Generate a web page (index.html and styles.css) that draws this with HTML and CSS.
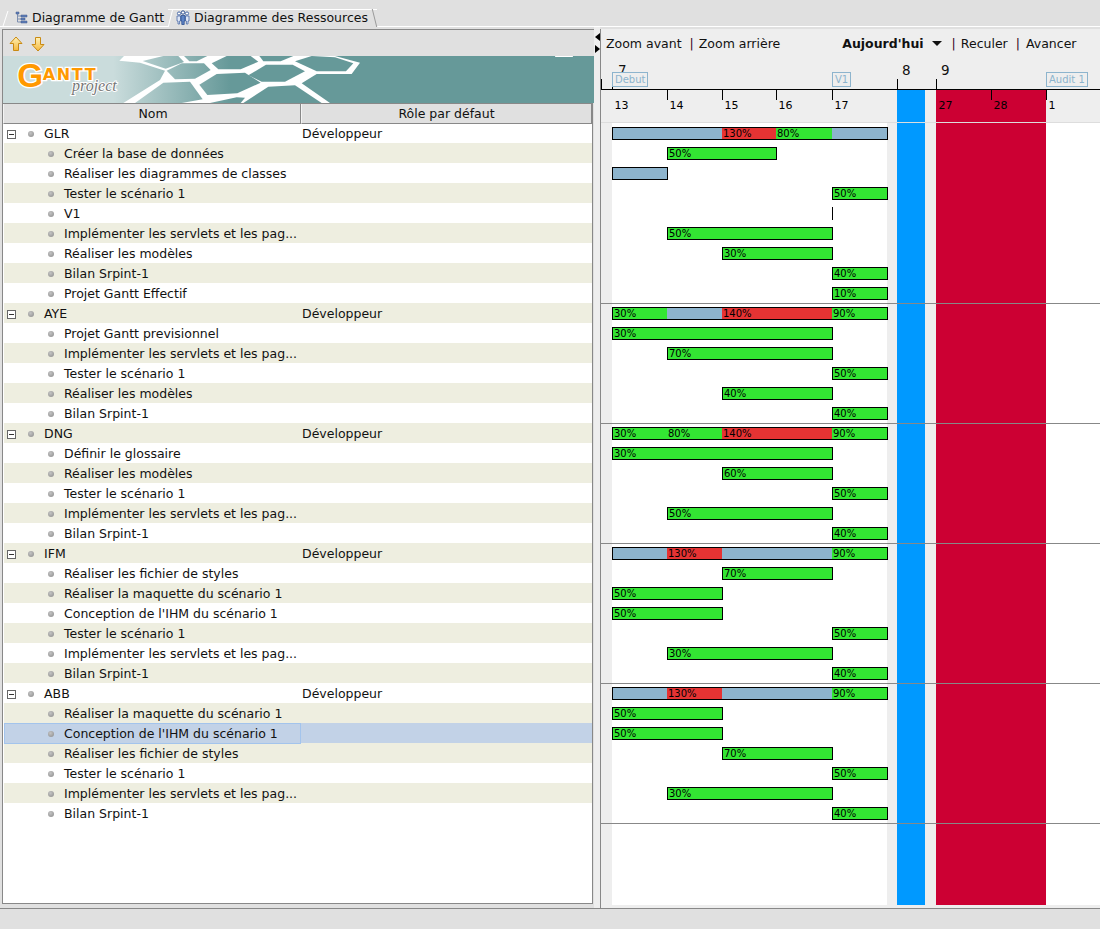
FILE: index.html
```html
<!DOCTYPE html>
<html lang="fr">
<head>
    <meta charset="UTF-8">
    <title>GanttProject</title>
    <link rel="stylesheet" href="styles.css">
</head>
<body>
    <div class="tabbar">
        <div class="tab tab-gantt">
            <svg class="tab-icon" width="13" height="13" viewBox="0 0 13 13">
                <path d="M2.5 2v9M2.5 5h4M2.5 8h4M2.5 11h4" fill="none" stroke="#7d8fb0"/>
                <path d="M1 1h3v2H1zM6 4h6v2H6zM6 7h4v2H6zM6 10h6v2H6z" fill="#5f7fb8" stroke="#41598c" stroke-width=".5"/>
            </svg>
            Diagramme de Gantt
        </div>
        <div class="tab tab-active">
            <svg class="tab-icon" width="14" height="15" viewBox="0 0 14 15">
                <circle cx="3" cy="3.5" r="1.6" fill="#fff" stroke="#4a6ba8"/>
                <circle cx="11" cy="3.5" r="1.6" fill="#fff" stroke="#4a6ba8"/>
                <path d="M1 6h3.5v5H3.6v3H2v-3H1zM9.500 6H13v5h-1v3h-1.600v-3h-.9z" fill="#dfe7f5" stroke="#4a6ba8" stroke-width=".8"/>
                <circle cx="7" cy="2.500" r="1.700" fill="#fff" stroke="#2f4f8f"/>
                <path d="M5 5.500h4v5.500H8.200v3.500H5.800V11H5z" fill="#5f85c5" stroke="#2f4f8f" stroke-width=".8"/>
            </svg>
            Diagramme des Ressources
        </div>
    </div>

    <div class="workspace">
        <div class="left-pane">
            <div class="left-toolbar">
                <svg width="14" height="16" viewBox="0 0 14 16">
                    <defs>
                        <linearGradient id="arrowFill" x1="0" y1="0" x2="0" y2="1">
                            <stop offset="0" stop-color="#fff2b8"/>
                            <stop offset="1" stop-color="#f5b83c"/>
                        </linearGradient>
                    </defs>
                    <path d="M7 1 13 7.500H9.500V14.500H4.500V7.500H1z" fill="url(#arrowFill)" stroke="#c98a14"/>
                </svg>
                <svg width="14" height="16" viewBox="0 0 14 16">
                    <path d="M7 15 13 8.500H9.500V1.500H4.500V8.500H1z" fill="url(#arrowFill)" stroke="#c98a14"/>
                </svg>
            </div>

            <svg class="banner" width="591" height="47" viewBox="9 168 1773 141">
                <defs>
                    <linearGradient id="bannerFill" gradientUnits="userSpaceOnUse" x1="340" y1="0" x2="690" y2="0">
                        <stop offset="0" stop-color="#cadcdc"/>
                        <stop offset="1" stop-color="#669999"/>
                    </linearGradient>
                </defs>
                <rect x="9" y="168" width="1773" height="141" fill="url(#bannerFill)"/>
                <polygon fill="#fff" points="358,182 372,168 1005,168 1080,188 1055,222 950,222 905,250 990,309 370,309 480,240 495,212 420,188"/>
                <g fill="url(#bannerFill)">
                    <polygon points="428,183 490,168 535,168 552,186 497,206"/>
                    <polygon points="552,168 622,168 590,184 568,184"/>
                    <polygon points="500,212 545,190 612,190 632,210 585,236 525,238"/>
                    <polygon points="635,190 680,168 752,168 775,185 722,208 655,208"/>
                    <polygon points="778,168 880,168 842,184 790,184"/>
                    <polygon points="745,226 798,194 878,194 915,214 855,245 785,245"/>
                    <polygon points="598,254 650,222 735,218 782,248 712,280 622,285"/>
                    <polygon points="885,184 935,168 1005,172 1060,190 1038,214 950,214"/>
                    <polygon points="730,309 805,260 885,256 965,309"/>
                    <polygon points="405,309 490,248 570,245 608,298 545,309"/>
                    <polygon points="630,309 710,292 735,293 722,309"/>
                </g>
                <rect x="1665" y="168" width="54" height="3" rx="1.500" fill="#fff"/>
                <text class="logo-g" x="52" y="262">G</text>
                <text class="logo-antt" x="128" y="241">ANTT</text>
                <text class="logo-project" x="216" y="274">project</text>
            </svg>

            <div class="table">
                <div class="table-head">
                    <div class="head-cell">Nom</div>
                    <div class="head-cell">Rôle par défaut</div>
                </div>
                <div class="rows">
                    <div class="row"><div class="name"><span class="toggle"></span><span class="dot"></span>GLR</div><div class="role">Développeur</div></div>
                    <div class="row"><div class="name task"><span class="dot"></span>Créer la base de données</div></div>
                    <div class="row"><div class="name task"><span class="dot"></span>Réaliser les diagrammes de classes</div></div>
                    <div class="row"><div class="name task"><span class="dot"></span>Tester le scénario 1</div></div>
                    <div class="row"><div class="name task"><span class="dot"></span>V1</div></div>
                    <div class="row"><div class="name task"><span class="dot"></span>Implémenter les servlets et les pag...</div></div>
                    <div class="row"><div class="name task"><span class="dot"></span>Réaliser les modèles</div></div>
                    <div class="row"><div class="name task"><span class="dot"></span>Bilan Srpint-1</div></div>
                    <div class="row"><div class="name task"><span class="dot"></span>Projet Gantt Effectif</div></div>

                    <div class="row"><div class="name"><span class="toggle"></span><span class="dot"></span>AYE</div><div class="role">Développeur</div></div>
                    <div class="row"><div class="name task"><span class="dot"></span>Projet Gantt previsionnel</div></div>
                    <div class="row"><div class="name task"><span class="dot"></span>Implémenter les servlets et les pag...</div></div>
                    <div class="row"><div class="name task"><span class="dot"></span>Tester le scénario 1</div></div>
                    <div class="row"><div class="name task"><span class="dot"></span>Réaliser les modèles</div></div>
                    <div class="row"><div class="name task"><span class="dot"></span>Bilan Srpint-1</div></div>

                    <div class="row"><div class="name"><span class="toggle"></span><span class="dot"></span>DNG</div><div class="role">Développeur</div></div>
                    <div class="row"><div class="name task"><span class="dot"></span>Définir le glossaire</div></div>
                    <div class="row"><div class="name task"><span class="dot"></span>Réaliser les modèles</div></div>
                    <div class="row"><div class="name task"><span class="dot"></span>Tester le scénario 1</div></div>
                    <div class="row"><div class="name task"><span class="dot"></span>Implémenter les servlets et les pag...</div></div>
                    <div class="row"><div class="name task"><span class="dot"></span>Bilan Srpint-1</div></div>

                    <div class="row"><div class="name"><span class="toggle"></span><span class="dot"></span>IFM</div><div class="role">Développeur</div></div>
                    <div class="row"><div class="name task"><span class="dot"></span>Réaliser les fichier de styles</div></div>
                    <div class="row"><div class="name task"><span class="dot"></span>Réaliser la maquette du scénario 1</div></div>
                    <div class="row"><div class="name task"><span class="dot"></span>Conception de l'IHM du scénario 1</div></div>
                    <div class="row"><div class="name task"><span class="dot"></span>Tester le scénario 1</div></div>
                    <div class="row"><div class="name task"><span class="dot"></span>Implémenter les servlets et les pag...</div></div>
                    <div class="row"><div class="name task"><span class="dot"></span>Bilan Srpint-1</div></div>

                    <div class="row"><div class="name"><span class="toggle"></span><span class="dot"></span>ABB</div><div class="role">Développeur</div></div>
                    <div class="row"><div class="name task"><span class="dot"></span>Réaliser la maquette du scénario 1</div></div>
                    <div class="row selected"><div class="name task"><span class="dot"></span>Conception de l'IHM du scénario 1</div></div>
                    <div class="row"><div class="name task"><span class="dot"></span>Réaliser les fichier de styles</div></div>
                    <div class="row"><div class="name task"><span class="dot"></span>Tester le scénario 1</div></div>
                    <div class="row"><div class="name task"><span class="dot"></span>Implémenter les servlets et les pag...</div></div>
                    <div class="row"><div class="name task"><span class="dot"></span>Bilan Srpint-1</div></div>
                </div>
            </div>
        </div>

        <div class="splitter">
            <span class="split-left"></span>
            <span class="split-right"></span>
        </div>

        <div class="right-pane">
            <div class="right-toolbar">
                <span>Zoom avant</span>
                <span class="pipe">|</span>
                <span>Zoom arrière</span>
                <span class="today">Aujourd'hui</span>
                <span class="caret"></span>
                <span class="pipe pipe-after-caret">|</span>
                <span>Reculer</span>
                <span class="pipe pipe-last">|</span>
                <span>Avancer</span>
            </div>

            <div class="weeks time-grid">
                <div class="week week-7">7</div>
                <div class="week week-8">8</div>
                <div class="week week-9">9</div>
                <div class="flag flag-debut">Debut</div>
                <div class="flag flag-v1">V1</div>
                <div class="flag flag-audit">Audit 1</div>
            </div>

            <div class="chart">
                <div class="stripes time-grid">
                    <div class="stripe-white d13 to18"></div>
                    <div class="stripe-blue"></div>
                    <div class="stripe-red"></div>
                    <div class="stripe-white stripe-last"></div>
                </div>

                <div class="days time-grid">
                    <div class="day d13 no-tick">13</div>
                    <div class="day d14">14</div>
                    <div class="day d15">15</div>
                    <div class="day d16">16</div>
                    <div class="day d17">17</div>
                    <div class="day day-27 no-tick">27</div>
                    <div class="day day-28">28</div>
                    <div class="day day-1">1</div>
                </div>

                <div class="gantt">
                    <div class="gantt-row time-grid"><div class="bar load d13 to18"><span class="seg span2"></span><span class="seg over">130%</span><span class="seg ok">80%</span><span class="seg"></span></div></div>
                    <div class="gantt-row time-grid"><div class="bar d14 to16">50%</div></div>
                    <div class="gantt-row time-grid"><div class="bar idle d13 to14"></div></div>
                    <div class="gantt-row time-grid"><div class="bar d17 to18">50%</div></div>
                    <div class="gantt-row time-grid"><div class="milestone d17"></div></div>
                    <div class="gantt-row time-grid"><div class="bar d14 to17">50%</div></div>
                    <div class="gantt-row time-grid"><div class="bar d15 to17">30%</div></div>
                    <div class="gantt-row time-grid"><div class="bar d17 to18">40%</div></div>
                    <div class="gantt-row time-grid"><div class="bar d17 to18">10%</div></div>

                    <div class="gantt-row time-grid sep"><div class="bar load d13 to18"><span class="seg ok">30%</span><span class="seg"></span><span class="seg over span2">140%</span><span class="seg ok">90%</span></div></div>
                    <div class="gantt-row time-grid"><div class="bar d13 to17">30%</div></div>
                    <div class="gantt-row time-grid"><div class="bar d14 to17">70%</div></div>
                    <div class="gantt-row time-grid"><div class="bar d17 to18">50%</div></div>
                    <div class="gantt-row time-grid"><div class="bar d15 to17">40%</div></div>
                    <div class="gantt-row time-grid"><div class="bar d17 to18">40%</div></div>

                    <div class="gantt-row time-grid sep"><div class="bar load d13 to18"><span class="seg ok">30%</span><span class="seg ok">80%</span><span class="seg over span2">140%</span><span class="seg ok">90%</span></div></div>
                    <div class="gantt-row time-grid"><div class="bar d13 to17">30%</div></div>
                    <div class="gantt-row time-grid"><div class="bar d15 to17">60%</div></div>
                    <div class="gantt-row time-grid"><div class="bar d17 to18">50%</div></div>
                    <div class="gantt-row time-grid"><div class="bar d14 to17">50%</div></div>
                    <div class="gantt-row time-grid"><div class="bar d17 to18">40%</div></div>

                    <div class="gantt-row time-grid sep"><div class="bar load d13 to18"><span class="seg"></span><span class="seg over">130%</span><span class="seg span2"></span><span class="seg ok">90%</span></div></div>
                    <div class="gantt-row time-grid"><div class="bar d15 to17">70%</div></div>
                    <div class="gantt-row time-grid"><div class="bar d13 to15">50%</div></div>
                    <div class="gantt-row time-grid"><div class="bar d13 to15">50%</div></div>
                    <div class="gantt-row time-grid"><div class="bar d17 to18">50%</div></div>
                    <div class="gantt-row time-grid"><div class="bar d14 to17">30%</div></div>
                    <div class="gantt-row time-grid"><div class="bar d17 to18">40%</div></div>

                    <div class="gantt-row time-grid sep"><div class="bar load d13 to18"><span class="seg"></span><span class="seg over">130%</span><span class="seg span2"></span><span class="seg ok">90%</span></div></div>
                    <div class="gantt-row time-grid"><div class="bar d13 to15">50%</div></div>
                    <div class="gantt-row time-grid"><div class="bar d13 to15">50%</div></div>
                    <div class="gantt-row time-grid"><div class="bar d15 to17">70%</div></div>
                    <div class="gantt-row time-grid"><div class="bar d17 to18">50%</div></div>
                    <div class="gantt-row time-grid"><div class="bar d14 to17">30%</div></div>
                    <div class="gantt-row time-grid"><div class="bar d17 to18">40%</div></div>

                    <div class="gantt-row time-grid sep"></div>
                </div>
            </div>
        </div>
    </div>

    <div class="statusbar"></div>
</body>
</html>
```

FILE: styles.css
```css
* {
    box-sizing: border-box;
}

body {
    margin: 0;
    height: 929px;
    overflow: hidden;
    display: flex;
    flex-direction: column;
    font-family: 'DejaVu Sans', sans-serif;
    font-size: 12.5px;
    color: #111;
    background-color: #e0e0e0;
}

/* tabs */

.tabbar {
    height: 27px;
    display: flex;
    align-items: flex-end;
    padding-left: 8px;
    border-bottom: 1px solid #fff;
}

.tab {
    position: relative;
    display: flex;
    align-items: center;
    gap: 4px;
    height: 15px;
    margin-bottom: 1px;
    white-space: nowrap;
}

.tab svg {
    flex: none;
}

.tab-gantt {
    width: 160px;
    padding-left: 7px;
}

.tab-gantt::before {
    content: "";
    position: absolute;
    left: -3px;
    bottom: -1px;
    width: 4px;
    height: 15px;
    border-left: 1px solid #fff;
    transform: skewX(-18deg);
}

.tab-active {
    width: 209px;
    height: 18px;
    margin-bottom: -1px;
    padding: 0 0 2px 8px;
    background: #e0e0e0;
    border-top: 1px solid #fff;
}

.tab-active::before,
.tab-active::after {
    content: "";
    position: absolute;
    top: -1px;
    bottom: 0;
    width: 1px;
}

.tab-active::before {
    left: 2px;
    background: #fff;
    transform: skewX(-14deg);
}

.tab-active::after {
    right: 2px;
    background: #999;
    transform: skewX(14deg);
}

/* main area */

.workspace {
    height: 882px;
    display: flex;
    border-bottom: 1px solid #888;
}

.left-pane {
    width: 592px;
    margin: 2px 0 4px 2px;
    display: flex;
    flex-direction: column;
    border-top: 1px solid #888;
    border-left: 1px solid #888;
}

.left-toolbar {
    height: 26px;
    flex: none;
    display: flex;
    align-items: center;
    gap: 8px;
    padding: 1px 0 0 6px;
}

.banner {
    display: block;
    flex: none;
}

.logo-g,
.logo-antt {
    font-weight: bold;
    fill: #ff9900;
    stroke: #fff;
    stroke-width: 8px;
    paint-order: stroke;
}

.logo-g {
    font-family: 'Liberation Sans', sans-serif;
    font-size: 100px;
}

.logo-antt {
    font-family: 'DejaVu Sans', sans-serif;
    font-size: 48px;
    letter-spacing: 5px;
}

.logo-project {
    font-family: 'Liberation Serif', serif;
    font-style: italic;
    font-size: 48px;
    fill: #777;
    stroke: #fff;
    stroke-width: 6px;
    paint-order: stroke;
}

.table {
    flex: 1;
    width: 590px;
    background: #fff;
    border: 1px solid #888;
    border-left: none;
}

.table-head {
    height: 19px;
    display: grid;
    grid-template-columns: 298px 1fr;
    text-align: center;
    background: #e0e0e0;
}

.head-cell {
    line-height: 19px;
    border-left: 1px solid #f4f4f4;
    border-right: 1px solid #888;
    border-bottom: 1px solid #888;
}

.head-cell:first-child {
    padding-left: 2px;
}

.rows {
    padding-left: 1px;
}

.row {
    height: 20px;
    display: grid;
    grid-template-columns: 297px 1fr;
    line-height: 20px;
    white-space: nowrap;
}

.row:nth-child(even) {
    background: #eeeee0;
}

.row.selected {
    background: #c2d2e7;
}

.row.selected .name {
    padding-left: 43px;
    border: 1px solid #a3c4ec;
    line-height: 18px;
}

.name {
    display: flex;
    align-items: center;
    padding: 1px 0 0 3px;
}

.name.task {
    padding-left: 44px;
}

.role {
    padding: 1px 0 0 1px;
}

.toggle {
    position: relative;
    flex: none;
    width: 9px;
    height: 9px;
    margin-right: 12px;
    background: #fff;
    border: 1px solid #666;
}

.toggle::after {
    content: "";
    position: absolute;
    left: 1px;
    top: 3px;
    width: 5px;
    height: 1px;
    background: #333;
}

.dot {
    flex: none;
    width: 6px;
    height: 6px;
    margin-right: 10px;
    border-radius: 50%;
    background: radial-gradient(circle at 40% 35%, #c4c4c4, #8a8a8a);
}

/* splitter */

.splitter {
    width: 6px;
    display: flex;
    flex-direction: column;
    gap: 4px;
    padding: 6px 0 0 1px;
    background: #eee;
}

.split-left,
.split-right {
    width: 0;
    height: 0;
    border-top: 4px solid transparent;
    border-bottom: 4px solid transparent;
}

.split-left {
    border-right: 5px solid #000;
}

.split-right {
    border-left: 5px solid #000;
}

/* right side */

.right-pane {
    flex: 1;
    min-width: 0;
    display: flex;
    flex-direction: column;
    margin-top: 2px;
    padding-bottom: 3px;
    background: #eee;
    border-left: 1px solid #888;
}

.right-toolbar {
    height: 27px;
    flex: none;
    display: flex;
    align-items: center;
    padding: 1px 0 0 5px;
    white-space: nowrap;
}

.pipe {
    margin: 0 5px 0 8px;
    color: #300020;
}

.today {
    margin-left: 62px;
    font-weight: bold;
}

.caret {
    width: 0;
    height: 0;
    margin-left: 8px;
    border-top: 5px solid #111;
    border-left: 5px solid transparent;
    border-right: 5px solid transparent;
}

.pipe-after-caret {
    margin-left: 10px;
}

.pipe-last {
    margin-right: 6px;
}

/* 13..17 feb, weekend, today, 27 feb..1 mar : shared by every row of the chart */
.time-grid {
    display: grid;
    grid-template-columns: 11px 55px 55px 54px 56px 55px 10px 28px 11px 55px 55px 54px;
}

.weeks {
    height: 34px;
    flex: none;
    border-bottom: 1px solid #000;
    position: relative;
}

.week {
    grid-row: 1;
    padding-top: 7px;
    font-size: 13.5px;
    line-height: 15px;
    background: linear-gradient(#000, #000) left bottom / 1px 10px no-repeat;
}

.week-7 {
    grid-column: 1 / 8;
    padding-left: 17px;
}

.week-8 {
    grid-column: 8 / 10;
    padding-left: 5px;
}

.week-9 {
    grid-column: 10 / 13;
    padding-left: 5px;
}

.flag {
    grid-row: 1;
    position: relative;
    justify-self: start;
    align-self: start;
    height: 15px;
    margin-top: 16px;
    padding: 0 2px;
    font-size: 10px;
    line-height: 13px;
    white-space: nowrap;
    color: #8db4cd;
    background: #eee;
    border: 1px solid #8db4cd;
}

.flag-debut {
    grid-column: 2;
}

.flag-debut::after {
    content: "";
    position: absolute;
    left: -1px;
    top: 14px;
    width: 1px;
    height: 3px;
    background: #000;
}

.flag-v1 {
    grid-column: 6;
}

.flag-audit {
    grid-column: 12;
}

.chart {
    position: relative;
    flex: 1;
    overflow: hidden;
}

.stripes {
    position: absolute;
    inset: 0;
}

.stripe-white {
    margin-top: 33px;
    background: #fff;
}

.stripe-blue {
    grid-column: 8;
    background: #0099ff;
}

.stripe-red {
    grid-column: 10 / 12;
    background: #cc0033;
}

.stripe-last {
    grid-column: 12;
}

.days {
    position: relative;
    height: 33px;
    border-bottom: 1px solid #ddd;
}

.day {
    padding: 9px 0 0 2.5px;
    font-size: 11px;
    line-height: 13px;
    color: #000;
    background: linear-gradient(#000, #000) left top / 1px 10px no-repeat;
}

.day.no-tick {
    background: none;
}

.day-27 {
    grid-column: 10;
}

.day-28 {
    grid-column: 11;
}

.day-1 {
    grid-column: 12;
}

.gantt {
    position: relative;
}

.gantt-row {
    height: 20px;
    padding-top: 4px;
    align-items: start;
}

.gantt-row.sep {
    padding-top: 3px;
    border-top: 1px solid #888;
}

.bar {
    width: calc(100% + 1px);
    height: 13px;
    padding-left: 1px;
    font-size: 10px;
    line-height: 11px;
    color: #000;
    background: #33e633;
    border: 1px solid #000;
    overflow: hidden;
}

.bar.idle {
    background: #8db4cd;
}

.bar.load {
    display: grid;
    grid-template-columns: 54px 55px 54px 56px 55px;
    padding: 0;
}

.seg {
    padding-left: 1px;
    background: #8db4cd;
}

.seg.ok {
    background: #33e633;
}

.seg.over {
    background: #e63333;
}

.seg.span2 {
    grid-column: span 2;
}

.milestone {
    width: 1px;
    height: 13px;
    background: #000;
}

/* column starts and ends on the time grid */
.d13 { grid-column-start: 2; }
.d14 { grid-column-start: 3; }
.d15 { grid-column-start: 4; }
.d16 { grid-column-start: 5; }
.d17 { grid-column-start: 6; }
.to14 { grid-column-end: 3; }
.to15 { grid-column-end: 4; }
.to16 { grid-column-end: 5; }
.to17 { grid-column-end: 6; }
.to18 { grid-column-end: 7; }

.statusbar {
    flex: 1;
}
```
